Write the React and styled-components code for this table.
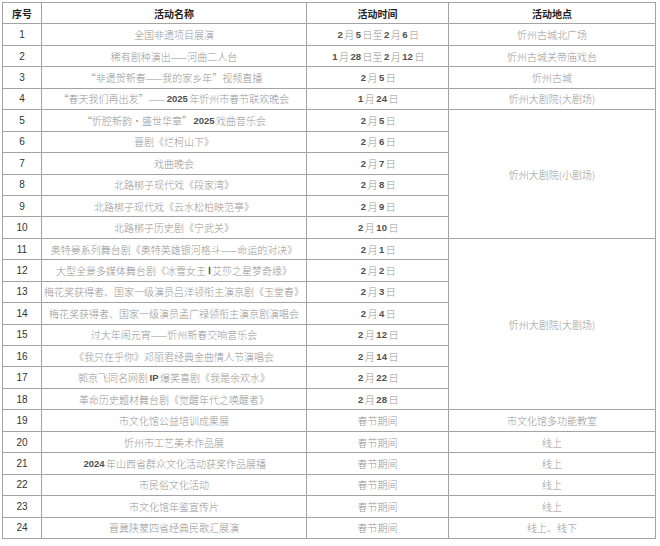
import React from 'react'
import styled, { createGlobalStyle } from 'styled-components'

const Global = createGlobalStyle`
  body {
    margin: 0;
    background: #fff;
  }
`;

const Page = styled.div`
  padding: 2px 0 0 2px;
`;

const Table = styled.div`
  display: grid;
  grid-template-columns: 38px 264px 141px 206px;
  grid-auto-rows: 1fr;
  height: 537px;
  width: max-content;
  gap: 1px;
  padding: 1px;
  box-sizing: border-box;
  background: #a3a3a3;
`;

const Cell = styled.div`
  background: #fff;
  display: flex;
  align-items: center;
  justify-content: center;
  white-space: nowrap;
  font-family: "Noto Sans CJK SC", sans-serif;
  font-size: 10px;
  font-weight: 300;
  color: #959595;
  grid-row: span ${p => p.$span || 1};
`;

const Head = styled(Cell)`
  color: #222;
  font-weight: 700;
`;

const Num = styled(Cell)`
  font-family: "Liberation Sans", sans-serif;
  font-weight: 400;
  color: #333;
`;

const Latin = styled.span`
  font-family: "Liberation Sans", sans-serif;
  font-weight: 700;
  font-size: 9.5px;
  color: #505050;
  margin: 0 1.5px;
`;

function Mixed({ text }) {
  const parts = text.split(/([A-Za-z0-9Ⅰ]+)/);
  return parts.map((p, i) =>
    /^[A-Za-z0-9Ⅰ]+$/.test(p) ? <Latin key={i}>{p}</Latin> : <React.Fragment key={i}>{p}</React.Fragment>
  );
}

const rows = [
  ['全国非遗项目展演', '2月5日至2月6日', '忻州古城北广场'],
  ['稀有剧种演出——河曲二人台', '1月28日至2月12日', '忻州古城关帝庙戏台'],
  ['“非遗贺新春——我的家乡年”视频直播', '2月5日', '忻州古城'],
  ['“春天我们再出发”——2025年忻州市春节联欢晚会', '1月24日', '忻州大剧院(大剧场)'],
  ['“忻腔新韵·盛世华章”2025戏曲音乐会', '2月5日', ['忻州大剧院(小剧场)', 6]],
  ['晋剧《烂柯山下》', '2月6日'],
  ['戏曲晚会', '2月7日'],
  ['北路梆子现代戏《段家湾》', '2月8日'],
  ['北路梆子现代戏《云水松柏映范亭》', '2月9日'],
  ['北路梆子历史剧《宁武关》', '2月10日'],
  ['奥特曼系列舞台剧《奥特英雄银河格斗——命运的对决》', '2月1日', ['忻州大剧院(大剧场)', 8]],
  ['大型全景多媒体舞台剧《冰雪女王Ⅰ艾莎之星梦奇缘》', '2月2日'],
  ['梅花奖获得者、国家一级演员吕洋领衔主演京剧《玉堂春》', '2月3日'],
  ['梅花奖获得者、国家一级演员孟广禄领衔主演京剧演唱会', '2月4日'],
  ['过大年闹元宵——忻州新春交响音乐会', '2月12日'],
  ['《我只在乎你》邓丽君经典金曲情人节演唱会', '2月14日'],
  ['郭京飞同名网剧IP爆笑喜剧《我是余欢水》', '2月22日'],
  ['革命历史题材舞台剧《觉醒年代之唤醒者》', '2月28日'],
  ['市文化馆公益培训成果展', '春节期间', '市文化馆多功能教室'],
  ['忻州市工艺美术作品展', '春节期间', '线上'],
  ['2024年山西省群众文化活动获奖作品展播', '春节期间', '线上'],
  ['市民俗文化活动', '春节期间', '线上'],
  ['市文化馆年鉴宣传片', '春节期间', '线上'],
  ['晋冀陕蒙四省经典民歌汇展演', '春节期间', '线上、线下'],
];

export default function App() {
  return (
    <Page>
      <Global />
      <Table>
        <Head>序号</Head>
        <Head>活动名称</Head>
        <Head>活动时间</Head>
        <Head>活动地点</Head>
        {rows.map(([name, date, place], i) => (
          <React.Fragment key={i}>
            <Num>{i + 1}</Num>
            <Cell><Mixed text={name} /></Cell>
            <Cell><Mixed text={date} /></Cell>
            {place && (Array.isArray(place)
              ? <Cell $span={place[1]}>{place[0]}</Cell>
              : <Cell>{place}</Cell>)}
          </React.Fragment>
        ))}
      </Table>
    </Page>
  )
}
